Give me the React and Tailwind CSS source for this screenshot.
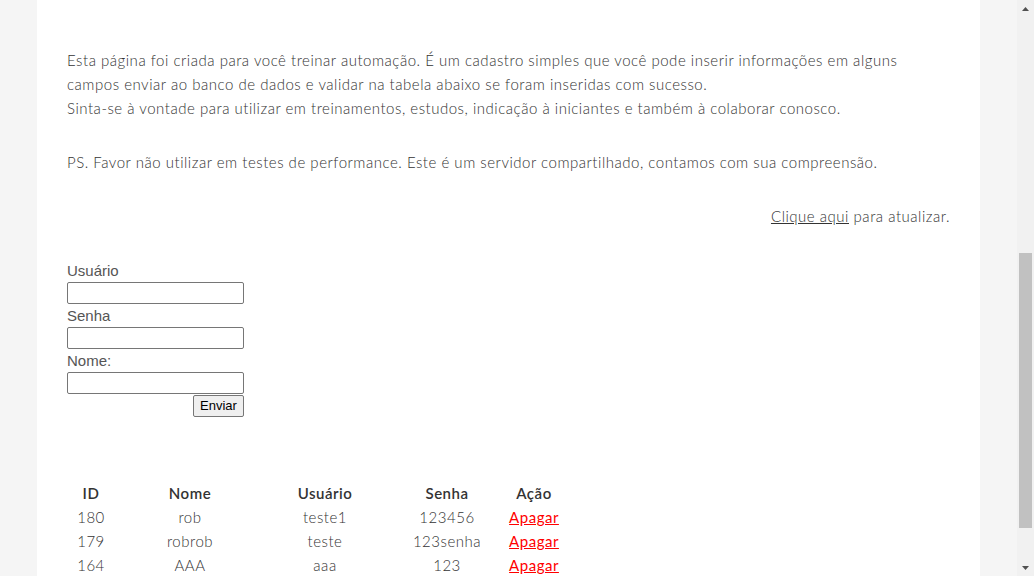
import React from "react";

const rows = [
  ["180", "rob", "teste1", "123456"],
  ["179", "robrob", "teste", "123senha"],
  ["164", "AAA", "aaa", "123"],
];

export default function App() {
  return (
    <div className="flex h-[576px] w-[1034px] overflow-hidden bg-[#f5f5f5]">
      <div className="flex w-[1017px] flex-none">
        <div className="w-[37px] flex-none bg-[#f5f5f5]" />
        <div
          className="w-[943px] flex-none bg-white px-[30px] pt-[48px] text-[15px] leading-[24px] tracking-[0.52px] text-[#333]"
          style={{ fontFamily: "Lato, 'Open Sans', sans-serif", fontWeight: 300 }}
        >
          <p>
            Esta página foi criada para você treinar automação. É um cadastro simples que você pode inserir informações em alguns campos enviar ao banco de dados e validar na tabela abaixo se foram inseridas com sucesso.
            <br />
            Sinta-se à vontade para utilizar em treinamentos, estudos, indicação à iniciantes e também à colaborar conosco.
          </p>
          <p className="mt-[30px]">
            PS. Favor não utilizar em testes de performance. Este é um servidor compartilhado, contamos com sua compreensão.
          </p>
          <p className="mt-[30px] text-right">
            <a className="underline">Clique aqui</a> para atualizar.
          </p>
          <form
            className="mt-[31px] flex w-[177px] flex-col text-[15px] tracking-normal text-[#555]"
            style={{ fontFamily: "'Liberation Sans', Arial, sans-serif", fontWeight: 400 }}
          >
            <label className="h-[23px] leading-[23px]">Usuário</label>
            <input className="h-[22px] w-[177px] rounded-[2px] border border-[#767676] bg-white" />
            <label className="h-[23px] leading-[23px]">Senha</label>
            <input className="h-[22px] w-[177px] rounded-[2px] border border-[#767676] bg-white" />
            <label className="h-[23px] leading-[23px]">Nome:</label>
            <input className="h-[22px] w-[177px] rounded-[2px] border border-[#767676] bg-white" />
            <div className="flex justify-end pt-px">
              <button
                type="button"
                className="h-[22px] w-[51px] rounded-[2px] border border-[#767676] bg-[#efefef] text-[13px] leading-[20px] text-black"
              >
                Enviar
              </button>
            </div>
          </form>
          <table className="mt-[64px] border-collapse text-center">
            <thead>
              <tr className="h-[24px]">
                <th className="w-[48px] p-0 font-semibold">ID</th>
                <th className="w-[150px] p-0 font-semibold">Nome</th>
                <th className="w-[120px] p-0 font-semibold">Usuário</th>
                <th className="w-[124px] p-0 font-semibold">Senha</th>
                <th className="w-[50px] p-0 font-semibold">Ação</th>
              </tr>
            </thead>
            <tbody>
              {rows.map((r) => (
                <tr key={r[0]} className="h-[24px]">
                  <td className="p-0">{r[0]}</td>
                  <td className="p-0">{r[1]}</td>
                  <td className="p-0">{r[2]}</td>
                  <td className="p-0">{r[3]}</td>
                  <td className="p-0">
                    <a className="text-[#f00] underline" style={{ fontWeight: 400 }}>Apagar</a>
                  </td>
                </tr>
              ))}
            </tbody>
          </table>
        </div>
        <div className="w-[37px] flex-none bg-[#f5f5f5]" />
      </div>
      <div className="flex w-[17px] flex-none flex-col items-center bg-[#f1f1f1]">
        <div className="flex h-[17px] items-center justify-center">
          <svg width="7" height="4" viewBox="0 0 7 4"><path d="M0 4L3.5 0L7 4Z" fill="#505050" /></svg>
        </div>
        <div className="h-[236px]" />
        <div className="h-[275px] w-[13px] bg-[#c1c1c1]" />
        <div className="flex-1" />
        <div className="flex h-[17px] items-center justify-center">
          <svg width="7" height="4" viewBox="0 0 7 4"><path d="M0 0L7 0L3.5 4Z" fill="#505050" /></svg>
        </div>
      </div>
    </div>
  );
}
